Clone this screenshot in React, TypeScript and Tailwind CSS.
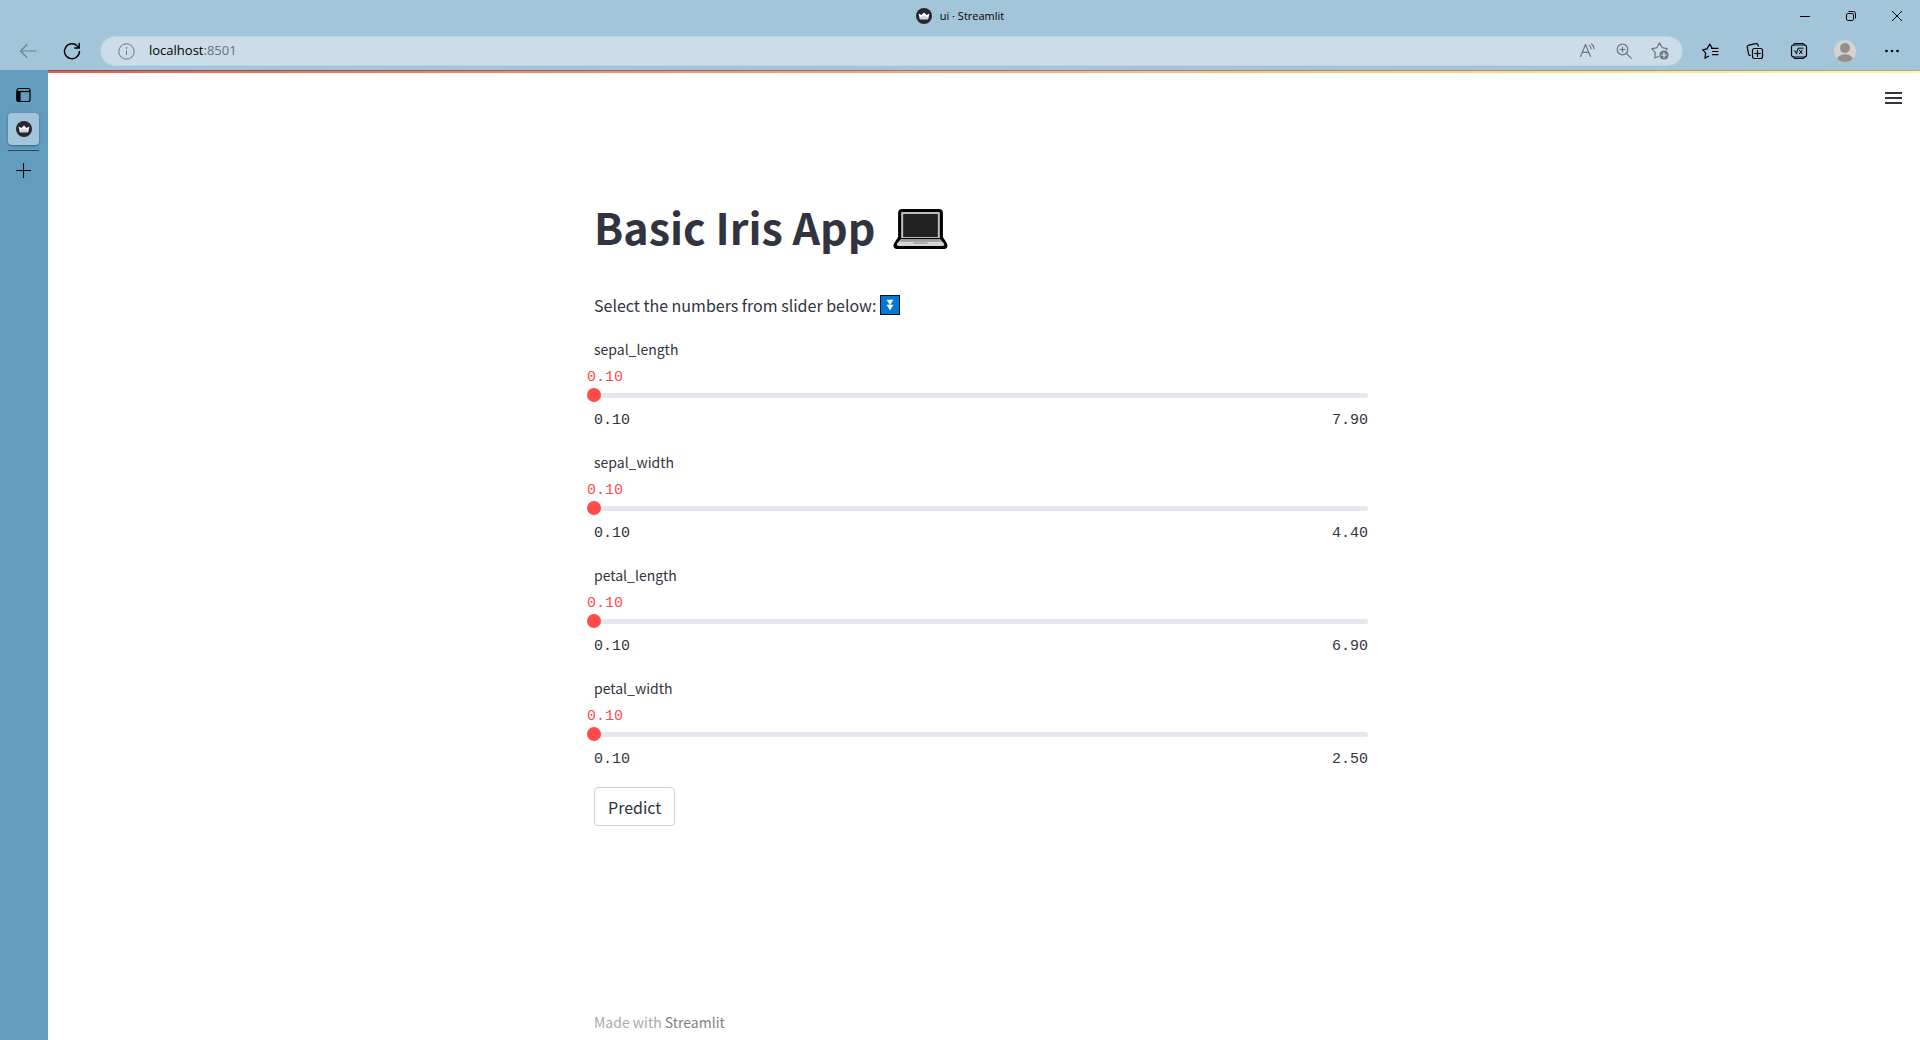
import { useState } from "react";
import type { ReactNode } from "react";

const sourceSans = "font-['Noto_Sans_CJK_SC','Noto_Sans',sans-serif]";

function Crown() {
  return (
    <svg width="16" height="16" viewBox="0 0 16 16" aria-hidden="true">
      <circle cx="8" cy="8" r="8" fill="#262730" />
      <path d="M2.600 5.600 5.400 7 8 4.400 10.600 7l2.800-1.400-1.300 5.600H3.900Z" fill="#fff" />
      <path d="M3.600 9.600 8 7.400l4.400 2.200-.4 1.600H3.900Z" fill="#d5d5d8" />
    </svg>
  );
}

function Icon({ size = 20, children }: { size?: number; children: ReactNode }) {
  return (
    <svg
      width={size}
      height={size}
      viewBox={`0 0 ${size} ${size}`}
      fill="none"
      stroke="currentColor"
      strokeWidth="1.2"
      strokeLinecap="round"
      strokeLinejoin="round"
      aria-hidden="true"
    >
      {children}
    </svg>
  );
}

function IconButton({ label, className, children }: { label: string; className: string; children: ReactNode }) {
  return (
    <button type="button" aria-label={label} className={`flex shrink-0 items-center justify-center ${className}`}>
      {children}
    </button>
  );
}

function TitleBar() {
  return (
    <div className="grid h-8 grid-cols-[1fr_auto_1fr] items-center">
      <div />
      <div className="flex items-center gap-2 text-[11px] text-black">
        <Crown />
        <span>ui · Streamlit</span>
      </div>
      <div className="flex justify-end text-black">
        <IconButton label="Minimize" className="h-8 w-[46px]">
          <svg width="10" height="10" viewBox="0 0 10 10" stroke="currentColor"><path d="M0 5.500h10" /></svg>
        </IconButton>
        <IconButton label="Restore" className="h-8 w-[46px]">
          <svg width="10" height="10" viewBox="0 0 10 10" fill="none" stroke="currentColor">
            <rect x=".5" y="2.500" width="7" height="7" rx="1.300" />
            <path d="M2.500.5h4.800A2.200 2.200 0 0 1 9.500 2.700v4.800" />
          </svg>
        </IconButton>
        <IconButton label="Close" className="h-8 w-[46px]">
          <svg width="10" height="10" viewBox="0 0 10 10" stroke="currentColor"><path d="m0 0 10 10M10 0 0 10" /></svg>
        </IconButton>
      </div>
    </div>
  );
}

function AddressBar() {
  return (
    <form className="mx-1.5 flex h-[30px] min-w-0 flex-1 items-center rounded-full border border-[#c1d2dc] bg-[#cbdde8] pl-[17px] pr-1 text-[#6c7780]" onSubmit={(e) => e.preventDefault()}>
      <button type="button" aria-label="Site information" className="mr-[14px]">
        <svg width="17" height="17" viewBox="0 0 17 17" fill="none" stroke="currentColor" aria-hidden="true">
          <circle cx="8.500" cy="8.500" r="7.700" />
          <path d="M8.500 7.500v4.500" />
          <circle cx="8.500" cy="5" r=".4" fill="currentColor" />
        </svg>
      </button>
      <div role="textbox" aria-label="Address" className="flex-1 text-[13px] text-[#66727b]">
        <span className="text-black">localhost</span>:8501
      </div>
      <IconButton label="Read aloud" className="h-7 w-9">
        <Icon>
          <path d="m2.500 15.500 5-12 5 12M4.300 11.300h6.400" />
          <path d="M11.500 4.500c1 .8 1.500 1.900 1.500 3.300M13.500 2.800c1.600 1.300 2.500 3 2.500 5" />
        </Icon>
      </IconButton>
      <IconButton label="Zoom" className="h-7 w-9">
        <Icon>
          <circle cx="8.500" cy="8.500" r="5.300" />
          <path d="m12.500 12.500 4.800 4.800M8.500 6v5M6 8.500h5" />
        </Icon>
      </IconButton>
      <IconButton label="Add to favorites" className="h-7 w-9">
        <Icon>
          <path d="M8.500 15.500 4.800 17l.4-5.600L1.800 7.800l5.100-1.200L9.500 1.800l2.600 4.800 5.200 1-1 1.200" />
          <circle cx="14" cy="14" r="4.600" fill="currentColor" stroke="none" />
          <path d="M14 11.500v5M11.500 14h5" stroke="#dbe7ee" />
        </Icon>
      </IconButton>
    </form>
  );
}

function Toolbar() {
  return (
    <div className="flex h-[38px] items-center pl-1.5 pr-[5px] text-black">
      <IconButton label="Back" className="h-8 w-11 text-[#698593]">
        <Icon>
          <path d="M2.500 10H18M9 3.500 2.500 10 9 16.500" />
        </Icon>
      </IconButton>
      <IconButton label="Refresh" className="h-8 w-11">
        <svg width="20" height="20" viewBox="0 0 20 20" fill="none" stroke="currentColor" strokeWidth="1.400" strokeLinecap="round" aria-hidden="true">
          <path d="M17.500 10.500a7.500 7.500 0 1 1-2.200-5.600L17 6.800M17.200 2.500v4.500h-4.500" />
        </svg>
      </IconButton>
      <AddressBar />
      <IconButton label="Favorites" className="h-8 w-11">
        <Icon>
          <path d="m7.500 15.200-3.600 1.900.8-4.900-3-3.400 4.300-.9L8.800 3l2.400 4.400h4.300M11.500 10.500H17M10.500 7.400H17M11.500 13.600H17" />
        </Icon>
      </IconButton>
      <IconButton label="Collections" className="h-8 w-11">
        <Icon>
          <rect x="7.500" y="7.500" width="10" height="10" rx="2" />
          <path d="M12.500 9.700v5.600M9.700 12.500h5.600M5.200 14.500a2 2 0 0 1-1.600-1.300L2.300 6.500a2 2 0 0 1 1.500-2.400l7-1.500a2 2 0 0 1 2.300 1.500l.2 1" />
        </Icon>
      </IconButton>
      <IconButton label="Math solver" className="h-8 w-11">
        <Icon>
          <rect x="2.500" y="4" width="15" height="12" rx="2" />
          <path d="M4.500 4c.2-1 .8-1.500 1.800-1.500h7.400c1 0 1.600.5 1.800 1.500M4.500 16c.2 1 .8 1.500 1.800 1.500h7.400c1 0 1.600-.5 1.800-1.500" />
          <path d="m5.500 10 .9.200 1.100 2.600L9 7.200h5M10.400 9.200l2.800 3.600M13.200 9.200l-2.800 3.600" strokeWidth="1" />
        </Icon>
      </IconButton>
      <IconButton label="Profile" className="h-8 w-12">
        <svg width="22" height="22" viewBox="0 0 22 22" aria-hidden="true">
          <clipPath id="avatar"><circle cx="11" cy="11" r="11" /></clipPath>
          <g clipPath="url(#avatar)">
            <rect width="22" height="22" fill="#d5d2cf" />
            <g fill="#938f8c">
              <circle cx="11" cy="8" r="5" />
              <ellipse cx="11" cy="20" rx="8" ry="5.800" />
            </g>
          </g>
        </svg>
      </IconButton>
      <IconButton label="Settings and more" className="h-8 w-[46px]">
        <svg width="14" height="4" viewBox="0 0 14 4" aria-hidden="true">
          <circle cx="1.500" cy="2" r="1.300" /><circle cx="7" cy="2" r="1.300" /><circle cx="12.500" cy="2" r="1.300" />
        </svg>
      </IconButton>
    </div>
  );
}

function TabRail() {
  return (
    <nav aria-label="Tabs" className="flex w-12 shrink-0 flex-col items-center bg-[#629dc0] pr-px pt-[17px] text-black">
      <button type="button" aria-label="Tab actions">
        <svg width="15" height="16" viewBox="0 0 15 16" fill="none" stroke="currentColor" strokeWidth="1.200" aria-hidden="true">
          <rect x="1" y="1.500" width="13" height="13" rx="2" />
          <path d="M1 4.500h13" />
          <path d="M1 4.500h3v10H2.500A1.500 1.500 0 0 1 1 13Z" fill="currentColor" />
        </svg>
      </button>
      <button type="button" aria-label="ui · Streamlit" className="mt-2.5 flex h-8 w-[31px] items-center justify-center rounded bg-[#a3c5da] shadow-sm shadow-black/30">
        <Crown />
      </button>
      <hr className="mt-[5px] w-[31px] border-[#2b4a5c]" />
      <button type="button" aria-label="New tab" className="mt-3">
        <svg width="15" height="15" viewBox="0 0 15 15" stroke="currentColor" strokeWidth="1.100" aria-hidden="true"><path d="M7.500 0v15M0 7.500h15" /></svg>
      </button>
    </nav>
  );
}

const laptop = (
  <svg width="55" height="42" viewBox="0 0 54 42" preserveAspectRatio="none" role="img" aria-label="Laptop" className="mt-1.5 shrink-0">
    <path d="M9 1h36q4 0 4 4v24l4 6.500q2 5.500-4 5.500H5q-6 0-4-5.500L5 29V5q0-4 4-4Z" fill="#000" />
    <path d="M9 4h36q1 0 1 1v25H8V5q0-1 1-1Z" fill="#bdbdbd" />
    <rect x="10" y="6" width="34" height="23" fill="#212121" />
    <path d="M8 31h38l4 4.500q1 2.500-2 2.500H6q-3 0-2-2.500Z" fill="#d4d4d4" />
    <path d="M9 31h36l2.500 2.800H6.500Z" fill="#999" />
    <path d="M21 33.500h12l1.500 2.500h-15Z" fill="#ababab" />
  </svg>
);

const downButton = (
  <svg width="20" height="20" viewBox="0 0 20 20" role="img" aria-label="Fast down" className="shrink-0">
    <rect width="20" height="20" fill="#06121e" />
    <rect x="1" y="1" width="18" height="18" fill="#0078d7" />
    <path d="M7 5h6l-3 4.500ZM7 10h6l-3 5Z" fill="#fff" stroke="#fff" strokeWidth=".6" />
  </svg>
);

function Slider({ name, max }: { name: string; max: number }) {
  const [value, setValue] = useState(0.1);
  const percent = ((value - 0.1) / (max - 0.1)) * 100;
  return (
    <div className="flex flex-col">
      <label htmlFor={name} className="text-sm leading-[26px]">{name}</label>
      <div className="pt-1.5 font-['Liberation_Mono',monospace] text-[15px] leading-5 text-[#ff4b4b]">
        <output htmlFor={name} className="relative -ml-[7px] block" style={{ left: `${percent}%` }}>
          {value.toFixed(2)}
        </output>
      </div>
      <div className="relative flex h-3.5 items-center">
        <div className="absolute inset-x-0 h-[5px] rounded bg-[#e4e8ee]">
          <div className="h-full rounded bg-[#ff4b4b]" style={{ width: `${percent}%` }} />
        </div>
        <input
          id={name}
          type="range"
          min={0.1}
          max={max}
          step={0.01}
          value={value}
          onChange={(e) => setValue(Number(e.target.value))}
          className="relative -mx-[7px] h-3.5 w-[calc(100%+14px)] shrink-0 cursor-pointer appearance-none bg-transparent [&::-webkit-slider-thumb]:h-3.5 [&::-webkit-slider-thumb]:w-3.5 [&::-webkit-slider-thumb]:appearance-none [&::-webkit-slider-thumb]:rounded-full [&::-webkit-slider-thumb]:bg-[#ff4b4b]"
        />
      </div>
      <div className="mt-1.5 flex justify-between font-['Liberation_Mono',monospace] text-[15px] leading-[26px]">
        <span>0.10</span>
        <span>{max.toFixed(2)}</span>
      </div>
    </div>
  );
}

export default function App() {
  return (
    <div className="flex min-h-screen flex-col bg-[#a3c5da] font-['Open_Sans','Noto_Sans',sans-serif]">
      <header>
        <TitleBar />
        <Toolbar />
      </header>
      <div className="flex flex-1">
        <TabRail />
        <div className={`flex min-w-0 flex-1 flex-col bg-white text-[#31333f] ${sourceSans}`}>
          <div className="h-[3px] border-t border-black/30 bg-linear-to-r from-[#e0605f] to-[#fcf8a8]" />
          <div className="flex h-[50px] items-center justify-end pr-[18px]">
            <button type="button" aria-label="Main menu">
              <svg width="17" height="12" viewBox="0 0 17 12" fill="currentColor" aria-hidden="true"><path d="M0 0h17v2H0zM0 5h17v2H0zM0 10h17v2H0z" /></svg>
            </button>
          </div>
          <div className="flex flex-1 flex-col pr-1.5">
            <main className="mx-auto flex w-full max-w-[774px] flex-1 flex-col pt-[74px]">
              <h1 className="flex items-center gap-[18px] text-[43px] leading-[58px] font-bold">
                Basic Iris App {laptop}
              </h1>
              <p className="mt-9 flex items-center gap-1 text-base leading-7">
                Select the numbers from slider below: {downButton}
              </p>
              <form className="mt-[17px] flex flex-col" onSubmit={(e) => e.preventDefault()}>
                <div className="flex flex-col gap-[15px]">
                  <Slider name="sepal_length" max={7.9} />
                  <Slider name="sepal_width" max={4.4} />
                  <Slider name="petal_length" max={6.9} />
                  <Slider name="petal_width" max={2.5} />
                </div>
                <button type="submit" className="mt-3.5 h-[39px] self-start rounded border border-[#d0d1d6] px-[13px] text-base">
                  Predict
                </button>
              </form>
              <footer className="mt-auto pb-1.5 text-sm leading-6 text-[#a9aaae]">
                Made with <a href="https://streamlit.io" className="text-[#808288]">Streamlit</a>
              </footer>
            </main>
          </div>
        </div>
      </div>
    </div>
  );
}
